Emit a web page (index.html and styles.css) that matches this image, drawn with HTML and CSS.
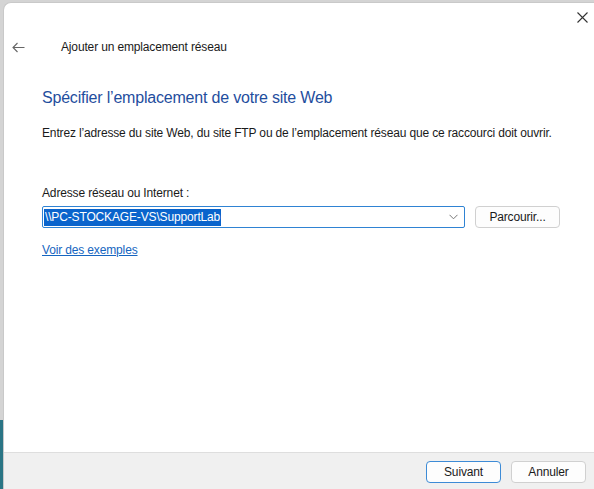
FILE: index.html
```html
<!DOCTYPE html>
<html lang="fr">
<head>
  <meta charset="UTF-8">
  <title>Ajouter un emplacement réseau</title>
  <link rel="stylesheet" href="styles.css">
</head>
<body>

  <div class="dialog">
    <div class="titlebar">
      <button class="close" aria-label="Fermer">
        <svg width="11" height="11" viewBox="0 0 11 11"><path d="M0.5 0.5L10.5 10.5M10.5 0.5L0.5 10.5" stroke="#333" stroke-width="1.1" fill="none"/></svg>
      </button>
    </div>

    <div class="header">
      <span class="back">
        <svg width="13" height="11" viewBox="0 0 13 11"><path d="M12.5 5.5H1M5.5 1L1 5.5L5.5 10" stroke="#666" stroke-width="1.1" fill="none"/></svg>
      </span>
      <span class="wizard-title">Ajouter un emplacement réseau</span>
    </div>

    <div class="content">
      <h1>Spécifier l’emplacement de votre site Web</h1>
      <p class="description">Entrez l’adresse du site Web, du site FTP ou de l’emplacement réseau que ce raccourci doit ouvrir.</p>

      <label class="field-label" for="address">Adresse réseau ou Internet :</label>
      <div class="field-row">
        <div class="combo" id="address">
          <span class="selected">\\PC-STOCKAGE-VS\SupportLab</span>
          <svg class="chevron" width="9" height="6" viewBox="0 0 9 6"><path d="M0.5 0.8L4.5 4.8L8.5 0.8" stroke="#777" stroke-width="1" fill="none"/></svg>
        </div>
        <button class="btn">Parcourir...</button>
      </div>

      <a class="examples" href="#">Voir des exemples</a>
    </div>

    <div class="footer">
      <button class="btn primary">Suivant</button>
      <button class="btn">Annuler</button>
    </div>
  </div>

</body>
</html>
```

FILE: styles.css
```css
html, body {
  height: 100%;
}

body {
  margin: 0;
  font-family: 'Liberation Sans', Arial, sans-serif;
  font-size: 12px;
  letter-spacing: -0.15px;
  color: #1a1a1a;
  background: linear-gradient(to bottom, #d4d4d4 420px, #2a7585 420px);
  overflow: hidden;
}

.dialog {
  margin: 2px 0 0 3px;
  height: calc(100% - 2px);
  box-sizing: border-box;
  background: #fff;
  border: 1px solid #c9c9c9;
  border-right: none;
  border-bottom: none;
  border-radius: 8px 0 0 0;
  display: flex;
  flex-direction: column;
}

.titlebar {
  height: 29px;
  display: flex;
  justify-content: flex-end;
  align-items: center;
}

.close {
  background: none;
  border: none;
  padding: 0;
  margin-right: 6px;
  width: 11px;
  height: 11px;
  display: flex;
}

.header {
  height: 30px;
  display: flex;
  align-items: center;
}

.back {
  width: 13px;
  margin-left: 8px;
  display: flex;
}

.wizard-title {
  margin-left: 36px;
  font-size: 12px;
}

.content {
  padding-left: 38px;
  flex: 1;
}

h1 {
  margin: 25px 0 0;
  font-size: 16px;
  letter-spacing: -0.2px;
  line-height: 22px;
  font-weight: normal;
  color: #1f4e9e;
}

.description {
  margin: 16px 0 0;
  line-height: 16px;
}

.field-label {
  display: block;
  margin-top: 44px;
  line-height: 16px;
}

.field-row {
  margin-top: 5px;
  display: flex;
  gap: 10px;
}

.combo {
  width: 423px;
  height: 22px;
  box-sizing: border-box;
  border: 1px solid #2f83d3;
  border-radius: 2px;
  display: flex;
  align-items: center;
  padding-left: 1px;
  position: relative;
}

.selected {
  background: #0a64cc;
  color: #fff;
  line-height: 17px;
  padding: 0 1px;
}

.chevron {
  position: absolute;
  right: 6px;
  top: 7px;
}

.btn {
  font-family: inherit;
  font-size: 12px;
  letter-spacing: inherit;
  color: #1a1a1a;
  background: #fdfdfd;
  border: 1px solid #d0d0d0;
  border-radius: 4px;
  width: 85px;
  height: 22px;
  padding: 0;
}

.examples {
  display: inline-block;
  margin-top: 14px;
  line-height: 16px;
  color: #1565c0;
  text-decoration: underline;
}

.footer {
  height: 37px;
  box-sizing: border-box;
  background: #f0f0f0;
  border-top: 1px solid #dedede;
  display: flex;
  justify-content: flex-end;
  align-items: flex-start;
  gap: 10px;
  padding: 8px 8px 0 0;
}

.footer .btn {
  width: 75px;
}

.primary {
  border-color: #3d8bd6;
}
```
